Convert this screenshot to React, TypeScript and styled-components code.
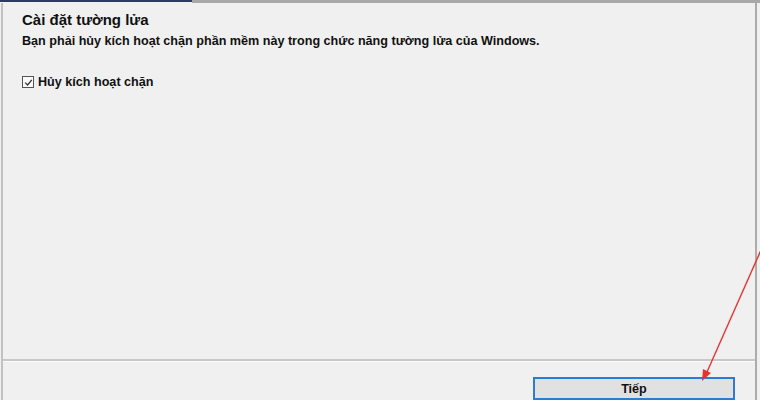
import React from "react";
import styled, { createGlobalStyle } from "styled-components";

const Global = createGlobalStyle`
  html, body { margin: 0; padding: 0; background: #f0f0f0; }
  body { width: 760px; height: 400px; overflow: hidden; }
`;

const Frame = styled.div`
  position: relative;
  width: 760px;
  height: 400px;
  display: flex;
  flex-direction: column;
  background: #f0f0f0;
  font-family: "Liberation Sans", Arial, sans-serif;
  color: #111;
`;

const TopEdge = styled.div`
  display: flex;
  height: 3px;
  flex: none;
`;

const TopSegment = styled.div<{ $accent?: boolean }>`
  width: ${(p) => (p.$accent ? "192px" : "auto")};
  flex: ${(p) => (p.$accent ? "none" : "1")};
  height: ${(p) => (p.$accent ? "2px" : "3px")};
  background: ${(p) => (p.$accent ? "#2c3b5e" : "#a8a8a8")};
`;

const Shell = styled.div`
  flex: 1;
  display: flex;
  flex-direction: column;
  margin-left: 1px;
  margin-right: 3px;
  border-left: 2px solid #c2c2c2;
  border-right: 2px solid #acacac;
  min-height: 0;
`;

const Content = styled.div`
  flex: 1;
  display: flex;
  flex-direction: column;
  padding: 8px 0 0 19px;
`;

const Title = styled.h1`
  margin: 0;
  font-size: 15px;
  font-weight: bold;
  line-height: 18px;
`;

const Subtitle = styled.p`
  margin: 4px 0 0;
  font-size: 12.6px;
  font-weight: bold;
  line-height: 16px;
`;

const CheckRow = styled.label`
  display: flex;
  align-items: center;
  gap: 4px;
  margin-top: 26px;
  font-size: 12.6px;
  font-weight: bold;
`;

const Box = styled.span`
  width: 10px;
  height: 10px;
  border: 1px solid #555;
  background: #fafafa;
  display: flex;
  align-items: center;
  justify-content: center;
`;

const Separator = styled.div`
  height: 2px;
  background: #c8c8c8;
  border-bottom: 1px solid #fbfbfb;
  flex: none;
`;

const Footer = styled.div`
  height: 38px;
  flex: none;
  display: flex;
  justify-content: flex-end;
  align-items: flex-end;
  padding: 0 20px 0 0;
`;

const NextButton = styled.button`
  width: 202px;
  height: 23px;
  box-sizing: border-box;
  background: #e1e1e1;
  border: 2px solid #2b7cd3;
  font-family: "Liberation Sans", Arial, sans-serif;
  font-size: 12.6px;
  font-weight: bold;
  color: #111;
  padding: 0;
`;

const Pointer = styled.svg`
  position: absolute;
  left: 0;
  top: 0;
  pointer-events: none;
`;

export default function App() {
  return (
    <>
      <Global />
      <Frame>
        <TopEdge>
          <TopSegment $accent />
          <TopSegment />
        </TopEdge>
        <Shell>
          <Content>
            <Title>Cài đặt tường lửa</Title>
            <Subtitle>
              Bạn phải hủy kích hoạt chặn phần mềm này trong chức năng tường lửa của Windows.
            </Subtitle>
            <CheckRow>
              <Box>
                <svg width="9" height="9" viewBox="0 0 9 9">
                  <path d="M1.2 4.6 L3.6 7 L7.8 1.8" fill="none" stroke="#333" strokeWidth="1.3" />
                </svg>
              </Box>
              Hủy kích hoạt chặn
            </CheckRow>
          </Content>
          <Separator />
          <Footer>
            <NextButton>Tiếp</NextButton>
          </Footer>
        </Shell>
        <Pointer width="760" height="400" viewBox="0 0 760 400">
          <line x1="761" y1="250" x2="707" y2="372" stroke="#e8332f" strokeWidth="1.4" />
          <polygon points="702,381 703,369 711,373" fill="#e8332f" />
        </Pointer>
      </Frame>
    </>
  );
}
